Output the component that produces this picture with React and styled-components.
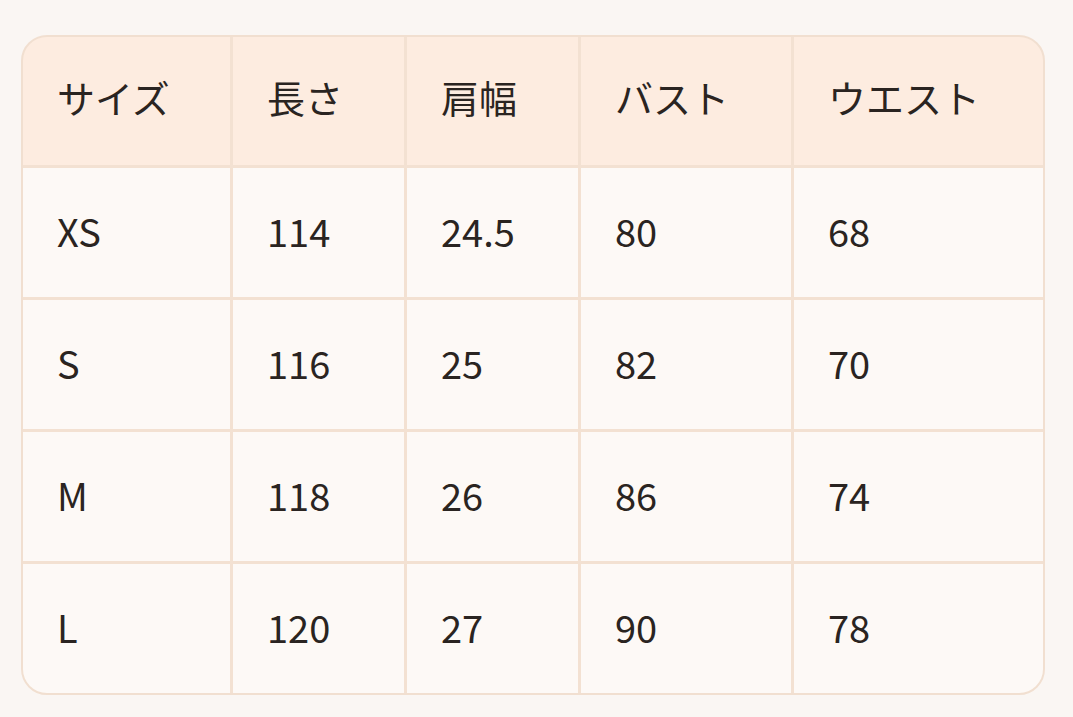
import React from "react";
import styled, { createGlobalStyle } from "styled-components";

const Global = createGlobalStyle`
  html, body { margin: 0; padding: 0; background: #faf6f3; }
  body { font-family: "Noto Sans CJK JP", "Noto Sans", sans-serif; }
`;

const Page = styled.div`
  padding: 35px 28px 20px 21px;
`;

const Grid = styled.div`
  width: 1024px;
  box-sizing: border-box;
  display: grid;
  grid-template-columns: 207px 171px 171px 210px 1fr;
  grid-template-rows: 128px repeat(4, 129px);
  gap: 3px;
  background: #f3e1d2;
  border: 2px solid #f1dfd0;
  border-radius: 26px;
  overflow: hidden;
`;

const Cell = styled.div`
  display: flex;
  align-items: center;
  padding-left: ${(p) => (p.$first ? 34 : 34)}px;
  background: ${(p) => (p.$head ? "#fdece0" : "#fdf9f6")};
  color: #2a2421;
  font-size: 38px;
  font-weight: 400;
  line-height: 1;
  padding-bottom: ${(p) => (p.$head ? 9 : 4)}px;
`;

const headers = ["サイズ", "長さ", "肩幅", "バスト", "ウエスト"];
const rows = [
  ["XS", "114", "24.5", "80", "68"],
  ["S", "116", "25", "82", "70"],
  ["M", "118", "26", "86", "74"],
  ["L", "120", "27", "90", "78"],
];

export default function App() {
  return (
    <Page>
      <Global />
      <Grid role="table">
        {headers.map((h, i) => (
          <Cell key={h} $head $first={i === 0} role="columnheader">
            {h}
          </Cell>
        ))}
        {rows.map((r) =>
          r.map((v, i) => (
            <Cell key={r[0] + i} $first={i === 0} role="cell">
              {v}
            </Cell>
          ))
        )}
      </Grid>
    </Page>
  );
}
